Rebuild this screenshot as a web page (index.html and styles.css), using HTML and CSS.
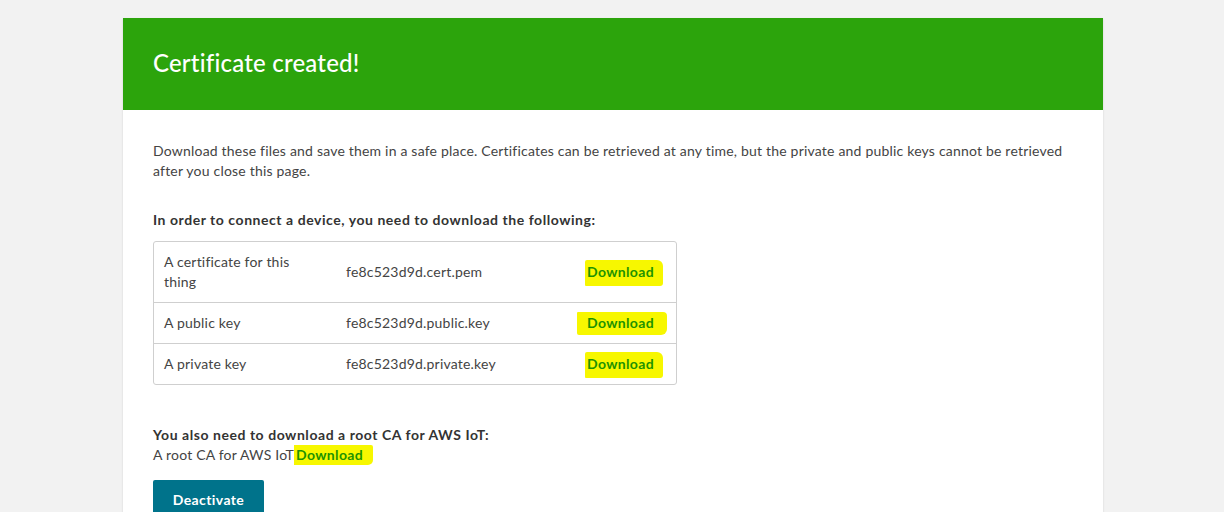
FILE: index.html
```html
<!DOCTYPE html>
<html>
<head>
<meta charset="utf-8">
<link rel="stylesheet" href="styles.css">
</head>
<body>
<div class="card">
  <div class="banner"><h1 class="title">Certificate created!</h1></div>
  <div class="content">
    <p class="intro">Download these files and save them in a safe place. Certificates can be retrieved at any time, but the private and public keys cannot be retrieved after you close this page.</p>
    <p class="label">In order to connect a device, you need to download the following:</p>
    <div class="files">
      <div class="row">
        <div class="cell name">A certificate for this thing</div>
        <div class="cell file">fe8c523d9d.cert.pem</div>
        <div class="cell act"><a class="dl hl-a">Download</a></div>
      </div>
      <div class="row">
        <div class="cell name">A public key</div>
        <div class="cell file">fe8c523d9d.public.key</div>
        <div class="cell act"><a class="dl hl-b">Download</a></div>
      </div>
      <div class="row">
        <div class="cell name">A private key</div>
        <div class="cell file">fe8c523d9d.private.key</div>
        <div class="cell act"><a class="dl hl-a">Download</a></div>
      </div>
    </div>
    <p class="label root">You also need to download a root CA for AWS IoT:</p>
    <p class="rootline">A root CA for AWS IoT<a class="dl hl-c">Download</a></p>
    <button class="btn">Deactivate</button>
  </div>
</div>
</body>
</html>
```
FILE: styles.css
```css
html, body {
  margin: 0;
  padding: 0;
  background: #f2f2f2;
  font-family: Lato, "Noto Sans", Arial, sans-serif;
  color: #444;
  font-size: 14px;
  line-height: 20px;
  letter-spacing: 0.2px;
  overflow: hidden;
}
.card {
  width: 980px;
  margin: 18px 0 0 123px;
  background: #fff;
  box-shadow: 0 1px 2px rgba(0,0,0,0.12);
  height: 520px;
}
.banner {
  background: #2ca40c;
  height: 92px;
  padding: 0 30px;
  display: flex;
  align-items: center;
}
.title {
  margin: 0 0 2px 0;
  color: #fff;
  font-size: 24px;
  font-weight: 500;
  letter-spacing: 0.2px;
}
.content {
  padding: 31px 30px 0 30px;
}
.intro {
  margin: 0;
  width: 925px;
}
.label {
  margin: 29px 0 0 0;
  font-weight: 700;
  color: #333;
  letter-spacing: 0.55px;
}
.files {
  margin-top: 11px;
  width: 522px;
  border: 1px solid #cfcfcf;
  border-radius: 3px;
}
.row {
  display: grid;
  grid-template-columns: 182px 1fr auto;
  align-items: center;
}
.row + .row {
  border-top: 1px solid #cfcfcf;
}
.cell {
  padding: 10px 0 10px 10px;
}
.name {
  width: 150px;
}
.act {
  padding-right: 22px;
}
.dl {
  color: #1e9300;
  font-weight: 700;
  background: #f7f700;
  letter-spacing: 0.35px;
  cursor: pointer;
}
.hl-a {
  padding: 3px 9px 6px 2px;
  margin: 0 -9px 0 -2px;
  border-radius: 2px 6px 3px 1px;
}
.hl-b {
  padding: 2px 13px 4px 10px;
  margin: 0 -13px 0 -10px;
  border-radius: 1px 4px 6px 2px;
}
.hl-c {
  padding: 1px 10px 2px 2px;
  margin-left: 0;
  border-radius: 0 2px 5px 0;
}
.root {
  margin-top: 40px;
}
.rootline {
  margin: 0;
}
.btn {
  margin-top: 15px;
  width: 111px;
  height: 38px;
  border: none;
  border-radius: 2px;
  background: #00738b;
  color: #fff;
  font-family: Lato, "Noto Sans", Arial, sans-serif;
  font-weight: 700;
  font-size: 14px;
  letter-spacing: 0.4px;
  padding: 0;
}
```
